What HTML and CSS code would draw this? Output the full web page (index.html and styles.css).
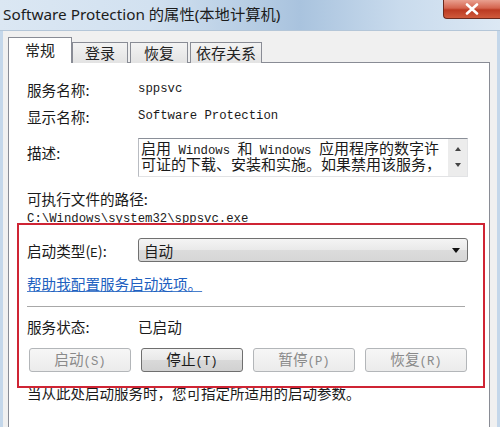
FILE: index.html
```html
<!DOCTYPE html>
<html>
<head>
    <title>Software Protection 的属性</title>
    <link rel="stylesheet" href="styles.css">
</head>
<body>
<div class="window">
    <div class="titlebar">
        <span class="title">Software Protection 的属性(本地计算机)</span>
        <div class="close">
            <svg viewBox="0 0 14 12" width="14" height="12">
                <path d="M2 1.5l10 9M12 1.5l-10 9" stroke="#ffffff" stroke-width="2.6" stroke-linecap="round"/>
            </svg>
        </div>
    </div>
    <div class="body">
        <div class="tabs">
            <div class="tab active">常规</div>
            <div class="tab t-login">登录</div>
            <div class="tab t-recover">恢复</div>
            <div class="tab t-deps">依存关系</div>
        </div>
        <div class="panel">
            <div class="row r-name">
                <span class="label">服务名称:</span>
                <span class="mono">sppsvc</span>
            </div>
            <div class="row r-display">
                <span class="label">显示名称:</span>
                <span class="mono">Software Protection</span>
            </div>
            <div class="row r-desc">
                <span class="label">描述:</span>
                <div class="desc-box">
                    <div class="desc-text">
                        <div class="desc-line">启用<span class="mono"> Windows </span>和<span class="mono"> Windows </span>应用程序的数字许</div>
                        <div class="desc-line">可证的下载、安装和实施。如果禁用该服务，</div>
                    </div>
                    <div class="scrollbar">
                        <span class="arrow up"></span>
                        <span class="arrow down"></span>
                    </div>
                </div>
            </div>
            <div class="path-label">可执行文件的路径:</div>
            <div class="path mono">C:\Windows\system32\sppsvc.exe</div>

            <div class="row r-start">
                <span class="label">启动类型(<span class="mono">E</span>):</span>
                <div class="select">
                    <span>自动</span>
                    <span class="select-arrow"></span>
                </div>
            </div>
            <a class="help-link" href="#">帮助我配置服务启动选项。</a>
            <div class="separator"></div>
            <div class="row r-status">
                <span class="label">服务状态:</span>
                <span>已启动</span>
            </div>
            <div class="buttons">
                <button class="btn" disabled>启动<span class="key">(S)</span></button>
                <button class="btn enabled">停止<span class="key">(T)</span></button>
                <button class="btn" disabled>暂停<span class="key">(P)</span></button>
                <button class="btn" disabled>恢复<span class="key">(R)</span></button>
            </div>
            <div class="hint">当从此处启动服务时，您可指定所适用的启动参数。</div>
        </div>
    </div>
    <!-- red annotation frame drawn over the dialog -->
    <div class="highlight"></div>
</div>
</body>
</html>
```

FILE: styles.css
```css
body {
    margin: 0;
    width: 500px;
    height: 427px;
    overflow: hidden;
    font-family: "Noto Sans CJK SC", "Noto Sans", sans-serif;
    color: #1a1a1a;
}
.window {
    position: relative;
    width: 500px;
    height: 427px;
    display: flex;
    flex-direction: column;
    background-color: #c4d7ea;
}
/* Title bar */
.titlebar {
    height: 30px;
    display: flex;
    align-items: flex-start;
    background: linear-gradient(90deg, #dbe7f3 0%, #d2e1f0 30%, #a9c3de 60%, #c9dbed 80%, #dce8f4 100%);
    border-bottom: 1px solid #b4c6d8;
}
.title {
    padding: 4px 0 0 3px;
    font-family: "Noto Sans", "Noto Sans CJK SC", sans-serif;
    font-size: 15.3px;
    line-height: 20px;
    color: #1c1c1c;
    white-space: nowrap;
}
.close {
    margin-left: auto;
    width: 56px;
    height: 18px;
    display: flex;
    align-items: center;
    justify-content: center;
    background: linear-gradient(180deg, #e9a090 0%, #d4644e 45%, #bb3a22 55%, #cf5a3c 100%);
    border: 1px solid #6b2a1e;
    border-top: none;
    border-right: none;
    border-radius: 0 0 0 4px;
}
/* Dialog body */
.body {
    flex: 1;
    display: flex;
    flex-direction: column;
    background-color: #f0f0f0;
    margin: 0 3px;
    padding: 6px 7px 0 5px;
    min-height: 0;
}
.tabs {
    display: flex;
    align-items: flex-end;
    height: 26px;
    margin-bottom: -1px;
    position: relative;
    z-index: 1;
}
.tab {
    height: 21px;
    box-sizing: border-box;
    border: 1px solid #898c95;
    border-bottom: none;
    background: linear-gradient(180deg, #f3f3f3, #e3e3e3);
    font-size: 15px;
    line-height: 20px;
    text-align: center;
    color: #222222;
}
.tab.active {
    width: 64px;
    height: 26px;
    line-height: 24px;
    background: #ffffff;
}
.t-login { width: 56px; }
.t-recover { width: 58px; margin-left: 2px; }
.t-deps { width: 72px; margin-left: 2px; }
.panel {
    flex: 1;
    background-color: #ffffff;
    border: 1px solid #898c95;
    border-bottom: none;
    padding: 15px 0 0 18px;
    font-size: 14.6px;
}
.mono {
    font-family: "Liberation Mono", monospace;
    font-size: 12.3px;
}
.row {
    display: flex;
    align-items: center;
}
.label {
    width: 111px;
    flex-shrink: 0;
}
.r-name, .r-display {
    height: 22px;
}
.r-display {
    margin-top: 5px;
}
.r-desc {
    margin-top: 11px;
    align-items: flex-start;
}
.r-desc .label {
    padding-top: 4px;
}
.desc-box {
    width: 330px;
    height: 39px;
    box-sizing: border-box;
    display: flex;
    border-top: 1px solid #8a8f98;
    border-left: 1px solid #b9bcc2;
    border-right: 1px solid #e2e3e5;
    border-bottom: 1px solid #e2e3e5;
}
.desc-text {
    flex: 1;
    padding: 1px 0 0 2px;
    font-size: 15px;
}
.desc-line {
    height: 16px;
    line-height: 16px;
    white-space: nowrap;
}
.scrollbar {
    width: 19px;
    background-color: #ececec;
    display: flex;
    flex-direction: column;
    align-items: center;
    justify-content: space-between;
    padding: 8px 0 9px;
    box-sizing: border-box;
}
.arrow {
    width: 0;
    height: 0;
    border-left: 3.5px solid transparent;
    border-right: 3.5px solid transparent;
}
.arrow.up {
    border-bottom: 4px solid #444444;
}
.arrow.down {
    border-top: 4px solid #444444;
}
.path-label {
    margin-top: 12px;
    height: 20px;
    line-height: 20px;
}
.path {
    margin-top: 3px;
    height: 14px;
    line-height: 14px;
}
.r-start {
    margin-top: 12px;
    height: 24px;
}
.select {
    width: 330px;
    height: 24px;
    box-sizing: border-box;
    border: 1px solid #707070;
    border-radius: 3px;
    background: linear-gradient(180deg, #f4f4f4 0%, #e9e9e9 50%, #dcdcdc 51%, #d6d6d6 100%);
    display: flex;
    align-items: center;
    justify-content: space-between;
    padding: 0 7px 0 5px;
}
.select-arrow {
    width: 0;
    height: 0;
    border-left: 4px solid transparent;
    border-right: 4px solid transparent;
    border-top: 5px solid #111111;
}
.help-link {
    display: block;
    width: max-content;
    margin-top: 12px;
    height: 20px;
    line-height: 20px;
    color: #2060c0;
    text-decoration: underline;
    text-decoration-color: #4a80cc;
}
.separator {
    margin-top: 12px;
    width: 438px;
    height: 1px;
    background-color: #a8a8a8;
}
.r-status {
    margin-top: 9px;
    height: 20px;
}
.buttons {
    margin: 12px 0 0 2px;
    display: grid;
    grid-template-columns: repeat(4, 102px);
    column-gap: 10px;
}
.btn {
    height: 24px;
    padding: 0;
    font-family: "Noto Sans CJK SC", sans-serif;
    font-size: 14.6px;
    line-height: 20px;
    color: #8a8a8a;
    border: 1px solid #b3b6b9;
    border-radius: 3px;
    background: linear-gradient(180deg, #f6f6f6, #ebebeb);
}
.btn.enabled {
    color: #1a1a1a;
    border-color: #6f6f6f;
    background: linear-gradient(180deg, #f3f3f3 0%, #e8e8e8 50%, #d9d9d9 51%, #d1d1d1 100%);
}
.key {
    font-family: "Liberation Mono", monospace;
    font-size: 12.3px;
}
.hint {
    margin-top: 11px;
    height: 20px;
    line-height: 20px;
    font-size: 14.5px;
}
.highlight {
    position: absolute;
    left: 17px;
    top: 223px;
    width: 468px;
    height: 165px;
    box-sizing: border-box;
    border: 2px solid #cf2434;
}
```
